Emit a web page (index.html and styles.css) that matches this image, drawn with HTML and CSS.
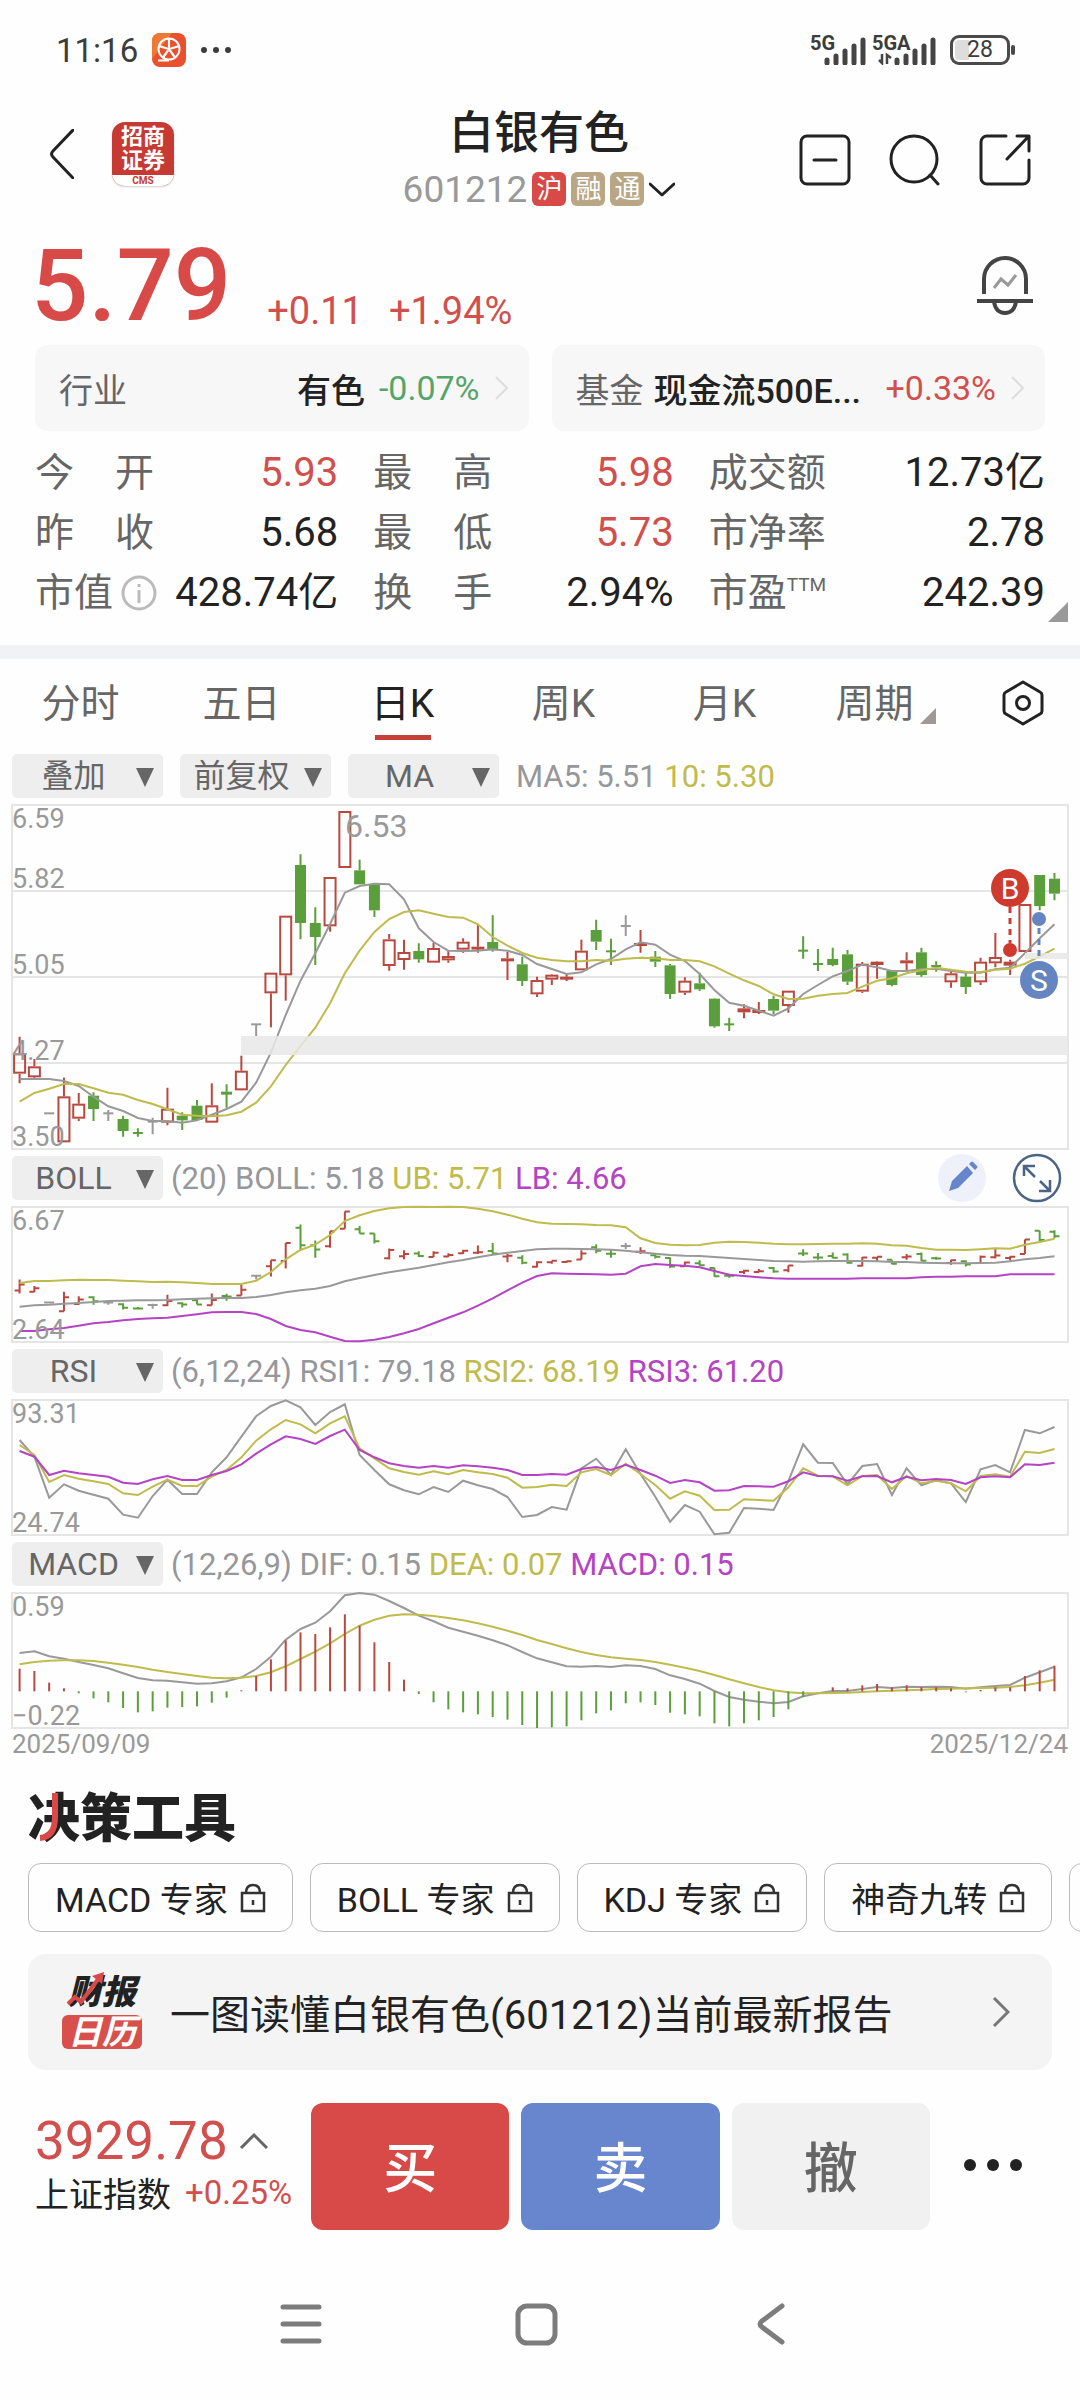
FILE: index.html
```html
<!DOCTYPE html>
<html lang="zh-CN">
<head>
<meta charset="utf-8">
<meta name="viewport" content="width=device-width, initial-scale=1">
<title>白银有色 601212</title>
<link rel="stylesheet" href="styles.css">
</head>
<body>
<div class="status">
  <div class="status-side">
    <span class="clock">11:16</span>
    <svg class="film" viewBox="0 0 34 34" aria-hidden="true"><rect width="34" height="34" rx="8" fill="#e9502b"/><path d="M0 26V8a8 8 0 0 1 8-8h12z" fill="#ec7a35"/><circle cx="17" cy="16" r="10.5" fill="none" stroke="#fff" stroke-width="2"/><circle cx="17" cy="16" r="2" fill="#fff"/><path d="M17 6v8M27 13l-8 2.500M23 24.500l-5-7M11 24.500l5-7M7 13l8 2.500M6 27.500h11" stroke="#fff" stroke-width="2.200"/></svg>
    <svg class="more-dots" viewBox="0 0 32 8" aria-hidden="true"><g fill="#3c3c3c"><circle cx="4" cy="4" r="3"/><circle cx="16" cy="4" r="3"/><circle cx="28" cy="4" r="3"/></g></svg>
  </div>
  <div class="status-side">
    <div class="cell"><b>5G</b><svg viewBox="0 0 42 28" aria-hidden="true"><path d="M3 26v-3M12 26v-7M21 26v-12M30 26V9M39 26V3" stroke="#444" stroke-width="5" stroke-linecap="round"/></svg></div>
    <div class="cell cell-wide"><b>5GA</b><svg viewBox="0 0 58 28" aria-hidden="true"><path d="M19 26v-3M28 26v-7M37 26v-12M46 26V9M55 26V3" stroke="#444" stroke-width="5" stroke-linecap="round"/><path d="M4 17v9l-3-3M9 27v-9l4 3" stroke="#444" stroke-width="2.500" fill="none"/></svg></div>
    <div class="battery"><span>28</span></div>
  </div>
</div>

<header class="top">
  <div class="top-side">
    <button class="icon" aria-label="返回"><svg width="24" height="50" viewBox="0 0 24 50"><path d="M23 1 3 22q-3 3 0 6l20 21" class="line3"/></svg></button>
    <div class="broker"><span>招商<br>证券</span><small>CMS</small></div>
  </div>
  <div class="title">
    <h1>白银有色</h1>
    <div class="code">601212<span class="tag red-bg">沪</span><span class="tag">融</span><span class="tag">通</span><svg width="26" height="15" viewBox="0 0 26 15"><path d="m1 2 12 11L25 2" class="line3"/></svg></div>
  </div>
  <div class="top-side top-actions">
    <button class="icon" aria-label="移除自选"><svg width="52" height="52" viewBox="0 0 52 52"><rect x="2" y="2" width="48" height="48" rx="6" class="line3"/><path d="M15 26h22" class="line3"/></svg></button>
    <button class="icon" aria-label="搜索"><svg width="52" height="52" viewBox="0 0 52 52"><circle cx="25" cy="25" r="23" class="line3"/><path d="m41 41 8 9" class="line3"/></svg></button>
    <button class="icon" aria-label="分享"><svg width="52" height="52" viewBox="0 0 52 52"><path d="M27 2H8a6 6 0 0 0-6 6v36a6 6 0 0 0 6 6h36a6 6 0 0 0 6-6V26M38 2h12v15M49 3 28 25" class="line3"/></svg></button>
  </div>
</header>

<main>
<section class="price">
  <strong>5.79</strong><span>+0.11</span><span>+1.94%</span>
  <button class="icon bell" aria-label="提醒"><svg width="58" height="60" viewBox="0 0 58 60"><g fill="none" stroke="#444" stroke-width="4"><path d="M8 39V24a21 21 0 0 1 42 0v15M1 46h56M18 47q2 11 11 11t11-11"/><path d="m18 33 7-9 7 6 8-10" stroke="#999" stroke-width="3"/></g></svg></button>
</section>

<section class="related">
  <a href="#industry"><span class="muted">行业</span><b class="push">有色</b><span class="green">-0.07%</span><svg width="14" height="24" viewBox="0 0 14 24"><path d="m1 1 11 11L1 23"/></svg></a>
  <a href="#fund"><span class="muted">基金</span><b>现金流500E...</b><span class="red push">+0.33%</span><svg width="14" height="24" viewBox="0 0 14 24"><path d="m1 1 11 11L1 23"/></svg></a>
</section>

<section class="quote">
  <dl>
    <div><dt class="two"><i>今</i><i>开</i></dt><dd class="red">5.93</dd></div>
    <div><dt class="two"><i>昨</i><i>收</i></dt><dd>5.68</dd></div>
    <div><dt>市值<svg class="info" width="36" height="36" viewBox="0 0 36 36"><circle cx="18" cy="18" r="16"/><path d="M18 15v13M18 9v3"/></svg></dt><dd>428.74亿</dd></div>
  </dl>
  <dl>
    <div><dt class="two"><i>最</i><i>高</i></dt><dd class="red">5.98</dd></div>
    <div><dt class="two"><i>最</i><i>低</i></dt><dd class="red">5.73</dd></div>
    <div><dt class="two"><i>换</i><i>手</i></dt><dd>2.94%</dd></div>
  </dl>
  <dl>
    <div><dt>成交额</dt><dd>12.73亿</dd></div>
    <div><dt>市净率</dt><dd>2.78</dd></div>
    <div><dt>市盈<sup>TTM</sup></dt><dd>242.39</dd></div>
  </dl>
  <svg class="expand" width="20" height="20" viewBox="0 0 20 20"><path d="M20 0v20H0z" fill="#999"/></svg>
</section>

<nav class="tabs">
  <button>分时</button><button>五日</button><button class="on">日K</button><button>周K</button><button>月K</button>
  <button>周期<svg width="16" height="16" viewBox="0 0 16 16"><path d="M16 0v16H0z" fill="#a09896"/></svg></button>
  <button aria-label="设置"><svg width="42" height="46" viewBox="0 0 42 46"><path d="M21 2 38 12q2 1 2 3v16q0 2-2 3L21 44 4 34q-2-1-2-3V15q0-2 2-3z" class="line3"/><circle cx="21" cy="23" r="6.500" class="line3"/></svg></button>
</nav>

<section class="charts">
  <div class="bar bar-main">
    <label class="pick"><select aria-label="叠加"><option>叠加</option></select></label>
    <label class="pick"><select aria-label="复权"><option>前复权</option></select></label>
    <label class="pick"><select aria-label="主图指标"><option>MA</option></select></label>
    <p><span>MA5: 5.51</span> <span class="c2">10: 5.30</span></p>
  </div>
  <svg id="kline" class="panel" viewBox="0 0 1056 344"></svg>
  <div class="bar">
    <label class="pick"><select aria-label="副图一"><option>BOLL</option></select></label>
    <p><span>(20)</span> <span>BOLL: 5.18</span> <span class="c2">UB: 5.71</span> <span class="c3">LB: 4.66</span></p>
    <button class="icon edit" aria-label="画线"><svg width="48" height="48" viewBox="0 0 48 48"><circle cx="24" cy="24" r="24" fill="#eef1f9"/><path d="m11 37 3-10 15-15 6 7-15 15zM31 10l2-2q1-1 2 0l4 4q1 1 0 2l-2 2z" fill="#6685cd"/></svg></button>
    <button class="icon" aria-label="全屏"><svg width="50" height="50" viewBox="0 0 50 50"><g fill="none" stroke="#4b6584" stroke-width="2.500"><circle cx="25" cy="25" r="23"/><path d="M12 23V13h11M12 13l11 11M38 27v11H27M38 38 28 28"/></g></svg></button>
  </div>
  <svg id="boll" class="panel" viewBox="0 0 1056 135"></svg>
  <div class="bar">
    <label class="pick"><select aria-label="副图二"><option>RSI</option></select></label>
    <p><span>(6,12,24)</span> <span>RSI1: 79.18</span> <span class="c2">RSI2: 68.19</span> <span class="c3">RSI3: 61.20</span></p>
  </div>
  <svg id="rsi" class="panel" viewBox="0 0 1056 135"></svg>
  <div class="bar">
    <label class="pick"><select aria-label="副图三"><option>MACD</option></select></label>
    <p><span>(12,26,9)</span> <span>DIF: 0.15</span> <span class="c2">DEA: 0.07</span> <span class="c3">MACD: 0.15</span></p>
  </div>
  <svg id="macd" class="panel" viewBox="0 0 1056 135"></svg>
  <div class="dates"><time>2025/09/09</time><time>2025/12/24</time></div>
</section>

<section class="tools">
  <h2>决策工具<svg width="52" height="52" viewBox="0 0 52 52"><path d="M27 1v24q0 20-15 21" fill="none" stroke="#d84a48" stroke-width="6"/></svg></h2>
  <div class="chips">
    <button>MACD 专家<svg class="lock" viewBox="0 0 26 30"><path d="M2 10h22v18H2zM6 10q0-8 7-8t7 8M13 17v5"/></svg></button>
    <button>BOLL 专家<svg class="lock" viewBox="0 0 26 30"><path d="M2 10h22v18H2zM6 10q0-8 7-8t7 8M13 17v5"/></svg></button>
    <button>KDJ 专家<svg class="lock" viewBox="0 0 26 30"><path d="M2 10h22v18H2zM6 10q0-8 7-8t7 8M13 17v5"/></svg></button>
    <button>神奇九转<svg class="lock" viewBox="0 0 26 30"><path d="M2 10h22v18H2zM6 10q0-8 7-8t7 8M13 17v5"/></svg></button>
    <button aria-label="更多工具"></button>
  </div>
  <a class="report" href="#report">
    <span class="cal"><b>财报</b><em>日历</em><svg viewBox="0 0 40 36"><path d="m3 33 7-7 6 5L34 7" fill="none" stroke="#d84a48" stroke-width="4"/><path d="m27 5 12-4-2 12z" fill="#d84a48"/></svg></span>
    <span class="report-text">一图读懂白银有色(601212)当前最新报告</span>
    <svg class="go" width="18" height="30" viewBox="0 0 18 30"><path d="m2 1 14 14L2 29"/></svg>
  </a>
</section>
</main>

<footer class="trade">
  <div class="index">
    <div><strong>3929.78</strong><svg width="28" height="16" viewBox="0 0 28 16"><path d="M1 15 14 2l13 13"/></svg></div>
    <div class="index-name">上证指数<span>+0.25%</span></div>
  </div>
  <button class="buy">买</button><button class="sell">卖</button><button class="cancel">撤</button>
  <button class="icon more" aria-label="更多"><svg width="58" height="12" viewBox="0 0 58 12"><circle cx="6" cy="6" r="6"/><circle cx="29" cy="6" r="6"/><circle cx="52" cy="6" r="6"/></svg></button>
</footer>
<nav class="system">
  <button class="icon" aria-label="最近任务"><svg width="44" height="44" viewBox="0 0 44 44"><path d="M4 5h36M4 22h36M4 39h36" stroke-width="5"/></svg></button>
  <button class="icon" aria-label="主屏幕"><svg width="44" height="44" viewBox="0 0 44 44"><rect x="4" y="4" width="37" height="37" rx="9" stroke-width="5"/></svg></button>
  <button class="icon" aria-label="后退"><svg width="44" height="44" viewBox="0 0 44 44"><path d="M33 4 13 19q-4 3 0 6l20 15" stroke-width="5"/></svg></button>
</nav>
<script src="charts.js"></script>
</body>
</html>
```
FILE: styles.css
```css
* { box-sizing: border-box; }
body {
  margin: 0;
  background: #fefefe;
  color: #222;
  font-family: Roboto, "Noto Sans CJK SC", sans-serif;
  overflow-x: hidden;
}
button { border: 0; background: none; padding: 0; margin: 0; font: inherit; color: inherit; }
a { color: inherit; text-decoration: none; }
i { font-style: normal; }
svg { display: block; flex: none; }
.icon { display: flex; align-items: center; justify-content: center; }
.line3 { fill: none; stroke: #222; stroke-width: 3; stroke-linecap: round; stroke-linejoin: round; }
.red { color: #d14f4c; }
.green { color: #55a468; }
.muted { color: #666; }
.push { margin-left: auto; }

.status { display: flex; justify-content: space-between; height: 100px; padding: 0 70px 0 56px; color: #3c3c3c; }
.status-side { display: flex; align-items: center; gap: 14px; }
.clock { font-size: 33px; }
.film { width: 34px; height: 34px; }
.more-dots { width: 32px; height: 8px; }
.cell { position: relative; width: 56px; height: 30px; }
.cell svg { position: absolute; right: 0; bottom: 0; height: 28px; }
.cell b { position: absolute; left: 0; top: -1px; font-size: 20px; line-height: 18px; font-weight: 700; }
.status-side:last-child { gap: 6px; }
.cell-wide { width: 64px; }
.battery { position: relative; margin-left: 8px; width: 60px; height: 30px; border: 3px solid #4a4a4a; border-radius: 9px; background: linear-gradient(90deg, #ddd 30%, transparent 30%); background-clip: content-box; padding: 2px; text-align: center; }
.battery span { display: block; font-size: 23px; line-height: 20px; }
.battery::after { content: ""; position: absolute; right: -8px; top: 7px; width: 4px; height: 10px; border-radius: 2px; background: #4a4a4a; }

.top { display: grid; grid-template-columns: 1fr auto 1fr; height: 126px; padding: 0 49px 0 47px; }
.top-side { display: flex; align-items: center; gap: 38px; padding: 0 0 18px 3px; }
.top-actions { justify-content: flex-end; padding: 0 0 6px; }
.broker { display: flex; flex-direction: column; width: 62px; height: 64px; border-radius: 13px; overflow: hidden; background: #c73a33; color: #fff; text-align: center; box-shadow: 0 1px 2px #ccc; }
.broker span { flex: 1; padding-top: 3px; font-size: 22px; line-height: 24px; font-weight: 700; }
.broker small { height: 11px; background: #fff; color: #c73a33; font-size: 10px; line-height: 11px; font-weight: 700; }
.title { text-align: center; }
h1 { margin: 6px 0 0; font-size: 45px; line-height: 56px; font-weight: 500; }
.code { display: flex; align-items: center; justify-content: center; gap: 5px; height: 54px; font-size: 37px; color: #999; }
.tag { width: 34px; height: 34px; border-radius: 6px; background: #b9a684; color: #fff; font-size: 26px; line-height: 34px; }
.red-bg { background: #d84a48; }

.price { display: flex; align-items: baseline; gap: 32px; height: 119px; padding: 2px 46px 0 31px; color: #d14f4c; }
.price strong { color: #d84a48; font-size: 101px; line-height: 116px; font-weight: 500; margin-right: 4px; }
.price span { position: relative; top: 4px; font-size: 38px; margin-right: -6px; }
.bell { margin-left: auto; align-self: flex-start; margin-top: 27px; }

.related { display: grid; grid-template-columns: 1fr 1fr; gap: 23px; padding: 0 35px; }
.related a { display: flex; align-items: center; gap: 10px; height: 86px; padding: 0 20px 0 24px; border-radius: 12px; background: #f7f7f7; font-size: 34px; white-space: nowrap; }
.related b { font-weight: 500; }
.related b.push { margin-right: 4px; }
.related svg { fill: none; stroke: #ddd; stroke-width: 2; margin-left: 5px; }

.quote { position: relative; display: grid; grid-template-columns: 303fr 300fr 336fr; gap: 35px; padding: 12px 35px 22px; border-bottom: 14px solid #f1f2f5; font-size: 40px; }
.quote dl { margin: 0; }
.quote dl div { display: flex; justify-content: space-between; line-height: 60px; height: 60px; white-space: nowrap; }
.quote dt { display: flex; align-items: center; color: #666; font-size: 39px; }
.quote dt.two { width: 119px; justify-content: space-between; }
.quote dd { margin: 0; }
.quote sup { align-self: flex-start; font-size: 19px; line-height: 44px; }
.info { margin-left: 8px; fill: none; stroke: #bbb; stroke-width: 3; }
.expand { position: absolute; right: 12px; bottom: 23px; }

.tabs { display: grid; grid-template-columns: repeat(6, 1fr) 114px; height: 95px; font-size: 39px; color: #666; }
.tabs button { position: relative; display: flex; align-items: center; justify-content: center; gap: 6px; padding-bottom: 13px; }
.tabs button svg { align-self: flex-end; margin-bottom: 17px; }
.tabs button:last-child { padding-bottom: 8px; }
.tabs button:last-child svg { align-self: center; margin: 0; }
.tabs .on { color: #222; }
.tabs .on::after { content: ""; position: absolute; left: calc(50% - 28px); bottom: 14px; width: 56px; height: 5px; background: #c6403a; }

.charts { padding: 0 12px; }
.bar { display: flex; align-items: center; height: 58px; color: #96979b; font-size: 31px; white-space: nowrap; }
.bar-main { gap: 17px; height: 51px; padding-bottom: 7px; }
.bar p { margin: 0 auto 0 8px; }
.bar-main p { margin-left: 0; }
.c2 { color: #bfbb4d; }
.c3 { color: #b444c4; }
.pick { position: relative; width: 151px; height: 44px; border-radius: 5px; background: #eee; color: #666; flex: none; font-size: 32px; }
.pick select { appearance: none; width: 100%; height: 44px; border: 0; padding: 0 28px 0 0; background: none; color: inherit; font: inherit; text-align: center; text-align-last: center; }
.pick::after { content: ""; position: absolute; right: 9px; top: 14px; border: 9px solid transparent; border-top: 19px solid #666; border-bottom: 0; pointer-events: none; }
.bar .edit { margin-right: 26px; }
.bar .icon:last-child { margin-right: 6px; }
.panel { width: 100%; height: auto; overflow: visible; }
.dates { display: flex; justify-content: space-between; color: #999; font-size: 26px; line-height: 32px; }

.tools { padding: 30px 28px 0; }
h2 { position: relative; margin: 0; font-size: 52px; line-height: 60px; font-weight: 900; }
h2 svg { position: absolute; left: 0; top: 2px; }
.chips { display: flex; gap: 17px; margin: 13px -28px 0 0; overflow: hidden; }
.chips button { display: flex; align-items: center; flex: none; gap: 12px; height: 69px; padding: 0 26px; border: 1px solid #bbb; border-radius: 13px; font-size: 34px; }
.chips button:last-child { width: 80px; }
.lock { width: 26px; height: 30px; fill: none; stroke: #333; stroke-width: 2.500; }
.report { display: flex; align-items: center; height: 116px; margin-top: 22px; padding: 0 42px 0 34px; border-radius: 18px; background: #f4f4f4; }
.cal { position: relative; display: grid; gap: 6px; width: 80px; font-size: 34px; line-height: 34px; text-align: center; }
.cal b { font-weight: 900; font-style: italic; }
.cal em { background: #d8504c; color: #fff; border-radius: 6px; font-weight: 700; }
.cal svg { position: absolute; left: 3px; top: -4px; width: 40px; height: 36px; }
.report-text { margin-left: 28px; font-size: 40px; white-space: nowrap; }
.go { margin-left: auto; fill: none; stroke: #777; stroke-width: 3; }

.trade { display: grid; grid-template-columns: 264px 1fr 1fr 1fr 103px; gap: 12px; padding: 33px 35px 0; }
.trade > button { height: 127px; border-radius: 12px; padding-bottom: 4px; font-size: 54px; font-weight: 500; }
.buy { background: #d84a48; color: #fff; }
.sell { background: #6786ce; color: #fff; }
.cancel { background: #f1f1f1; color: #666; }
.more svg { fill: #222; }
.index { white-space: nowrap; padding-top: 9px; }
.index div { display: flex; align-items: center; gap: 12px; height: 58px; }
.index strong { color: #d14f4c; font-size: 53px; font-weight: 400; }
.index svg { fill: none; stroke: #666; stroke-width: 3; }
.index .index-name { gap: 14px; height: 44px; font-size: 34px; }
.index-name span { color: #d14f4c; font-size: 33px; }
.system { display: flex; justify-content: center; gap: 191px; padding: 72px 9px 53px 0; }
.system svg { fill: none; stroke: #7c7c7c; stroke-linecap: round; }

.panel text { fill: #999; font-size: 27px; }
.panel .peak { font-size: 32px; }
.panel .mark { fill: #fff; font-size: 30px; text-anchor: middle; }
.frame { fill: none; stroke: #e5e5e5; stroke-width: 2; }
.gap { fill: #e8e8e8; opacity: 0.85; }
.s1, .s2, .s3 { fill: none; stroke-width: 2; }
.s1 { stroke: #999; }
.s2 { stroke: #bfbb4d; }
.s3 { stroke: #b444c4; }
.r { stroke: #b9483f; fill: none; stroke-width: 2; }
.g { stroke: #5a9f3c; fill: #5a9f3c; stroke-width: 2; }
.n { stroke: #999; fill: none; stroke-width: 2; }
```
FILE: charts.js
```js
// Each panel stores its series as heights on the plotting grid, three grid steps to one view unit.
const STEP = 14.784, FIRST = 7.6;
const px = i => FIRST + i * STEP;

// high, body top, body bottom, low, kind (r rise, g fall, n flat)
const candles = `740 790 851 880 r|807 829 862 866 r|970 970 970 970 n|863 919 1057 1057 r|909 941 986 993 r|907 917 957 993 g|960 970 970 993 n|977 987 1023 1040 g|1015 1029 1029 1040 g|983 995 995 1033 n|893 956 998 1006 r|967 977 991 1020 g|930 947 990 990 g|880 946 998 998 r|883 905 911 953 g|797 842 901 901 r|703 703 703 738 n|548 548 610 712 r|377 377 556 632 r|193 225 399 448 g|352 399 441 525 g|261 261 409 425 r|63 63 234 234 r|209 241 283 283 g|282 282 361 381 g|432 448 528 542 r|449 486 510 539 r|460 483 508 518 g|459 474 518 518 r|480 498 511 518 r|445 455 479 488 r|402 470 475 488 r|376 456 481 485 g|486 505 513 570 r|500 523 573 588 g|560 570 613 621 r|553 554 569 585 r|553 560 567 573 r|449 482 541 541 r|389 420 455 480 g|446 484 484 525 g|376 408 408 438 n|420 459 464 488 r|483 500 515 531 g|522 526 612 627 g|562 572 608 615 r|548 580 598 603 g|625 626 709 713 g|683 703 703 723 g|643 655 667 685 r|636 660 667 672 r|617 627 662 673 g|602 602 648 668 r|439 482 482 506 g|477 522 522 543 g|473 507 525 529 g|480 493 575 585 g|516 521 605 609 r|514 515 525 566 r|543 543 585 589 g|487 511 520 545 r|473 487 555 560 g|514 528 531 545 g|545 550 577 593 r|548 560 591 612 g|503 515 577 585 r|429 501 520 532 r|509 515 527 555 r|342 342 486 486 r|255 255 348 361 g|249 266 311 331 g`
  .split('|').map(s => { const p = s.split(' '); return [+p[0], +p[1], +p[2], +p[3], p[4]]; });

const ma5 = [867,867,867,873,888,920,949,963,984,993,993,998,991,974,957,935,878,788,675,572,490,402,308,288,281,283,328,415,456,482,483,482,478,482,495,522,537,552,547,523,507,478,457,464,494,513,552,600,638,647,662,677,655,612,585,559,543,524,532,543,543,538,536,543,548,548,538,533,490,445,403];
const ma10 = [935,909,896,882,882,895,908,914,930,942,958,974,977,979,976,965,938,889,825,768,713,640,550,482,426,387,366,361,371,381,383,403,441,467,489,503,510,514,514,510,512,506,503,505,510,510,514,529,551,571,588,613,627,626,617,612,609,590,572,565,550,541,533,539,545,546,539,536,521,499,476];
const ub = [399,393,393,391,389,390,390,392,394,396,395,397,399,402,402,402,392,366,328,300,284,255,213,196,183,175,171,170,171,170,171,176,184,194,206,217,221,222,223,225,226,232,265,279,284,286,285,278,275,276,278,281,283,283,282,281,281,280,281,286,287,294,299,299,300,298,295,296,284,276,266];
const mid = [470,466,464,461,459,456,453,452,451,451,450,448,446,445,444,444,441,435,427,421,416,408,394,384,375,367,360,353,345,337,330,322,314,308,303,298,296,296,297,298,299,302,307,311,315,317,318,321,324,327,330,333,334,335,334,333,333,333,334,336,336,338,339,340,340,339,338,334,328,324,319];
const lb = [543,543,538,534,527,520,516,511,507,505,503,498,493,487,486,486,492,507,528,540,547,560,573,574,569,561,550,537,520,503,487,467,445,421,398,378,370,371,372,373,374,371,349,342,345,347,352,363,374,378,382,385,386,386,386,386,386,385,385,385,385,382,380,380,379,379,379,373,373,373,373];
const rsi1 = [870,920,1043,1003,1022,1034,1046,1094,1103,1038,989,1032,1032,967,922,860,799,768,751,772,825,786,763,915,960,1003,1021,1033,1011,1026,992,1006,1017,1041,1101,1095,1071,1079,955,926,975,898,972,1040,1115,1065,1085,1153,1148,1074,1076,1080,993,883,938,939,1003,948,942,1035,955,1006,990,1000,1056,958,945,967,840,850,831];
const rsi2 = [885,915,996,975,986,994,1002,1030,1035,1010,989,1008,1008,980,960,922,872,838,810,823,850,820,799,895,925,955,966,974,964,973,960,967,972,983,1013,1011,1004,1008,967,957,975,941,972,1005,1046,1024,1037,1080,1079,1048,1050,1052,1012,955,977,979,1006,978,975,1017,978,1000,992,1000,1024,978,973,980,905,909,897];
const rsi3 = [903,920,975,962,970,975,980,998,1002,988,978,990,990,975,963,943,911,883,859,867,882,858,839,900,922,940,948,953,948,953,946,949,953,960,975,975,972,974,957,951,960,944,960,977,999,990,997,1022,1021,1008,1009,1010,994,967,978,979,992,979,978,997,980,991,987,990,1002,982,979,982,943,945,938];
const hist = [385,392,427,444,459,474,486,503,516,513,502,500,498,487,472,450,407,357,300,276,281,261,222,256,306,365,418,461,486,507,516,522,530,538,554,563,561,558,540,519,510,489,486,494,517,522,528,549,558,549,540,530,507,470,453,441,444,435,431,441,435,441,441,444,456,449,441,441,407,390,376];
const dif = [338,333,348,355,365,374,384,399,413,420,421,426,430,429,423,411,386,349,298,266,247,213,165,158,163,182,203,226,243,262,274,286,300,315,335,354,366,378,379,377,380,375,377,386,405,416,430,452,470,478,484,489,485,468,459,452,452,446,440,443,439,440,439,440,445,441,437,434,412,396,379];
const dea = [372,365,361,360,360,362,367,373,380,388,395,401,407,412,414,412,407,396,378,356,334,309,281,256,238,226,222,223,227,233,240,249,259,271,284,299,311,324,335,344,351,355,359,365,373,382,392,404,417,429,440,450,456,459,459,458,457,455,453,451,450,448,446,445,444,443,442,440,435,427,418];

const scale = top => v => (v - top) / 3;
const line = (data, y, cls) => `<polyline class="${cls}" points="${data.map((v, i) => px(i).toFixed(1) + ',' + y(v).toFixed(1)).join(' ')}"/>`;
const frame = h => `<rect class="frame" x="0" y="0" width="1056" height="${h}"/>`;
const label = (t, y) => `<text x="0" y="${y}">${t}</text>`;
const draw = (id, parts) => { document.getElementById(id).innerHTML = parts.join(''); };

const yk = scale(45);
const body = ([hi, top, bot, lo, kind], i) => {
  const x = px(i), w = kind === 'r' ? 5.5 : 4.5;
  let s = `<path class="${kind}" d="M${x} ${yk(hi)}V${yk(top)}M${x} ${yk(bot)}V${yk(lo)}"/>`;
  s += bot - top < 4
    ? `<path class="${kind}" d="M${x - 5} ${yk(top)}h10"/>`
    : `<rect class="${kind}" x="${x - w}" y="${yk(top) + 1}" width="${w * 2}" height="${Math.max(1, yk(bot) - yk(top) - 2)}"/>`;
  return s;
};
draw('kline', [
  frame(344),
  '<path class="frame" d="M0 86h1056M0 172h1056M0 258h1056"/>',
  ...candles.map(body),
  line(ma5, yk, 's1'), line(ma10, yk, 's2'),
  '<rect class="gap" x="229" y="231" width="827" height="19"/><rect class="gap" x="1013" y="148" width="43" height="6"/>',
  label('6.59', 23), label('5.82', 83), label('5.05', 169), label('4.27', 255), label('3.50', 341),
  '<text class="peak" x="333" y="32">6.53</text>',
  '<g stroke-width="3" stroke-dasharray="6 5"><path d="M998 102v36" stroke="#cf3a2f"/><path d="M1027 123v33" stroke="#6485c0"/></g>',
  '<g fill="#cf3a2f"><circle cx="998" cy="83" r="19"/><circle cx="998" cy="145" r="7"/></g>',
  '<g fill="#6485c0"><circle cx="1027" cy="175" r="19"/><circle cx="1027" cy="114" r="7"/></g>',
  '<text class="mark" x="998" y="94">B</text><text class="mark" x="1027" y="186">S</text>'
]);

// The Bollinger panel has its own price range, so the candle heights are rescaled to it.
const yb = scale(171);
const toBoll = v => (8 + (v - 45) * 0.301) / 3;
draw('boll', [
  frame(135),
  ...candles.map(([hi, top, bot, lo, kind], i) => {
    const x = px(i), up = kind === 'r';
    const open = toBoll(up ? bot : top), close = toBoll(up ? top : bot);
    return `<path class="${kind}" d="M${x} ${toBoll(hi)}V${toBoll(lo)}M${x - 5} ${open}h5M${x} ${close}h5"/>`;
  }),
  line(mid, yb, 's1'), line(ub, yb, 's2'), line(lb, yb, 's3'),
  label('6.67', 23), label('2.64', 132)
]);

const yr = scale(750);
draw('rsi', [frame(135), line(rsi1, yr, 's1'), line(rsi2, yr, 's2'), line(rsi3, yr, 's3'), label('93.31', 23), label('24.74', 132)]);

const ym = scale(158), ZERO = 453;
draw('macd', [
  frame(135),
  line(dif, ym, 's1'), line(dea, ym, 's2'),
  ...hist.map((v, i) => `<path class="${v < ZERO ? 'r' : 'g'}" d="M${px(i)} ${ym(ZERO)}V${ym(v)}"/>`),
  label('0.59', 23), label('−0.22', 132)
]);
```
